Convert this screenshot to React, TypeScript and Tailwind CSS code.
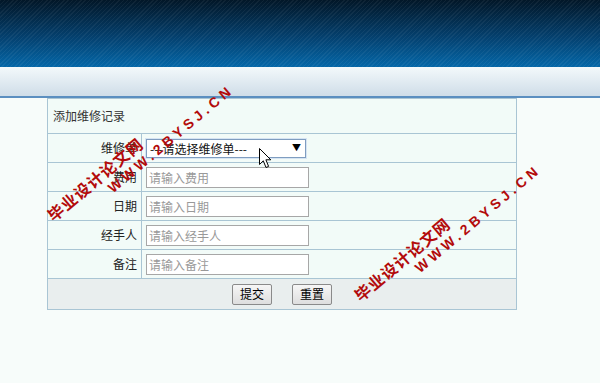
import React from 'react';

const rows = [
  { label: '费用', placeholder: '请输入费用' },
  { label: '日期', placeholder: '请输入日期' },
  { label: '经手人', placeholder: '请输入经手人' },
  { label: '备注', placeholder: '请输入备注' },
];

function Watermark({ left, top }: { left: number; top: number }) {
  return (
    <div
      className="absolute pointer-events-none origin-top-left -rotate-[40deg] text-[#b30b0b] font-bold leading-none whitespace-nowrap"
      style={{ left, top }}
    >
      <div className="text-[16px] tracking-[1px] font-['Noto_Sans_CJK_SC',sans-serif]">毕业设计论文网</div>
      <div className="ml-[64px] mt-[3px] text-[14px] tracking-[4px] font-['Liberation_Sans',sans-serif]">
        WWW.2BYSJ.CN
      </div>
    </div>
  );
}

function Cursor() {
  return (
    <svg className="absolute left-[259px] top-[148px]" width="13" height="21" viewBox="0 0 13 21">
      <path d="M0.5 0.5 L0.5 16.5 L4.3 12.8 L7 19.5 L9.6 18.4 L6.9 11.8 L11.8 11.8 Z" fill="#fff" stroke="#000" strokeWidth="1" />
    </svg>
  );
}

export default function App() {
  return (
    <div className="relative w-[600px] h-[383px] overflow-hidden bg-[#f7fcfa] font-['Noto_Sans_CJK_SC','Liberation_Sans',sans-serif] text-[12px] text-[#222]">
      {/* Header */}
      <div className="h-[67px] bg-[repeating-linear-gradient(135deg,rgba(255,255,255,0.05)_0px,rgba(255,255,255,0.05)_1px,transparent_1px,transparent_3px),linear-gradient(to_bottom,#021728,#04406e_55%,#0467a8)]" />
      <div className="h-[31px] bg-gradient-to-b from-[#f3f9fb] to-[#cfdde8] border-b-2 border-[#5b8fc0]" />

      {/* Form */}
      <table className="ml-[47px] w-[470px] border-collapse bg-[#f2fbf8]">
        <tbody>
          <tr className="h-[35px]">
            <td colSpan={2} className="border border-[#a9c5d4] px-[5px] text-[#333]">
              添加维修记录
            </td>
          </tr>
          <tr className="h-[29px]">
            <td className="w-[94px] border border-[#a9c5d4] pr-[4px] text-right">维修单</td>
            <td className="border border-[#a9c5d4] pl-[4px]">
              <div className="relative w-[160px] h-[19px]">
                <select className="appearance-none w-full h-full border border-[#7f9dc0] shadow-[0_0_0_1px_#d6e4f3] bg-white pl-[3px] text-[12px] text-[#111] outline-none">
                  <option>---请选择维修单---</option>
                </select>
                <span className="absolute right-[5px] top-[2px] text-[9px] text-black pointer-events-none">▼</span>
              </div>
            </td>
          </tr>
          {rows.map(r => (
            <tr key={r.label} className="h-[29px]">
              <td className="border border-[#a9c5d4] pr-[4px] text-right">{r.label}</td>
              <td className="border border-[#a9c5d4] pl-[4px]">
                <input
                  placeholder={r.placeholder}
                  className="block w-[163px] h-[21px] border border-[#a7a7a7] bg-white px-[2px] text-[12px] placeholder:text-[#999] outline-none"
                />
              </td>
            </tr>
          ))}
          <tr className="h-[31px] bg-[#e9eeee]">
            <td colSpan={2} className="border border-[#a9c5d4]">
              <div className="flex justify-center gap-[20px]">
                <button className="w-[40px] h-[21px] rounded-[2px] border border-[#8a8a8a] bg-gradient-to-b from-[#f6f6f6] to-[#dedede] text-[12px] text-black leading-none">
                  提交
                </button>
                <button className="w-[40px] h-[21px] rounded-[2px] border border-[#8a8a8a] bg-gradient-to-b from-[#f6f6f6] to-[#dedede] text-[12px] text-black leading-none">
                  重置
                </button>
              </div>
            </td>
          </tr>
        </tbody>
      </table>

      <Cursor />
      <Watermark left={44} top={211} />
      <Watermark left={351} top={291} />
    </div>
  );
}
